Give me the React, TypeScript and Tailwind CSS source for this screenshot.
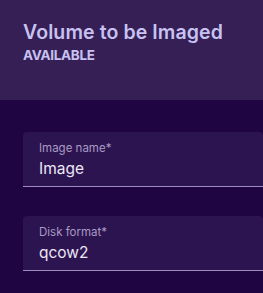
export default function App() {
  return (
    <div
      className="w-[263px] h-[293px] overflow-hidden bg-[#1f0542]"
      style={{ fontFamily: "Inter, 'Noto Sans', sans-serif" }}
    >
      <div className="h-[100px] bg-[#351f55] pl-[23px] pt-[20px]">
        <h1 className="text-[19.5px] leading-[24px] font-semibold text-[#c8c2f2] whitespace-nowrap tracking-[0.1px]">
          Volume to be Imaged
        </h1>
        <div className="mt-[3px] text-[13.5px] leading-[16px] font-bold text-[#c8c2f2] tracking-[-0.3px]">
          AVAILABLE
        </div>
      </div>
      <div className="pl-[23px] pt-[32px] flex flex-col gap-[29px]">
        <Field label="Image name*" value="Image" />
        <Field label="Disk format*" value="qcow2" />
      </div>
    </div>
  );
}

function Field({ label, value }: { label: string; value: string }) {
  return (
    <div className="h-[55px] rounded-t-[4px] bg-[#2c1450] border-b border-[#9d8cbf] pl-[16px] pt-[9px]">
      <div className="text-[11.5px] leading-[14px] text-[#a99ac4]">{label}</div>
      <div className="mt-[4px] text-[15.5px] leading-[20px] text-[#ece6f6]">{value}</div>
    </div>
  );
}
